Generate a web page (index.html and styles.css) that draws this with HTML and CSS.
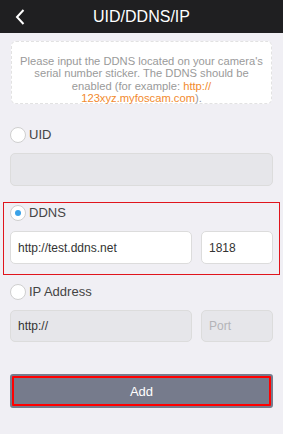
FILE: index.html
```html
<!DOCTYPE html>
<html lang="en">
<head>
  <meta charset="UTF-8">
  <title>UID/DDNS/IP</title>
  <link rel="stylesheet" href="styles.css">
</head>
<body>
  <header class="topbar">
    <svg class="back" width="12" height="18" viewBox="0 0 12 18">
      <path d="M9.5 2 L3 9 L9.5 16" fill="none" stroke="#fff" stroke-width="2"/>
    </svg>
    <h1>UID/DDNS/IP</h1>
  </header>

  <main class="content">
    <div class="tip">
      <p>Please input the DDNS located on your camera's</p>
      <p>serial number sticker. The DDNS should be</p>
      <p>enabled (for example: <span class="link">http://</span></p>
      <p><span class="link">123xyz.myfoscam.com</span>).</p>
    </div>

    <!-- UID -->
    <div class="group uid">
      <label class="option"><span class="radio"></span>UID</label>
      <div class="row">
        <div class="field disabled wide"></div>
      </div>
    </div>

    <!-- DDNS -->
    <div class="group ddns active">
      <label class="option"><span class="radio checked"></span>DDNS</label>
      <div class="row">
        <div class="field wide">http://test.ddns.net</div>
        <div class="field port">1818</div>
      </div>
    </div>

    <!-- IP -->
    <div class="group ip">
      <label class="option"><span class="radio"></span>IP Address</label>
      <div class="row">
        <div class="field disabled wide">http://</div>
        <div class="field disabled port placeholder">Port</div>
      </div>
    </div>

    <button class="add">Add</button>
  </main>
</body>
</html>
```

FILE: styles.css
```css
body {
  margin: 0;
  width: 283px;
  height: 434px;
  background-color: #f0eff4;
  font-family: "Liberation Sans", Arial, sans-serif;
  color: #333;
  overflow: hidden;
}

.topbar {
  height: 33px;
  background-color: #1f1f21;
  display: flex;
  align-items: center;
  justify-content: center;
  position: relative;
}

.topbar h1 {
  margin: 0;
  font-size: 16px;
  font-weight: normal;
  color: #fff;
}

.back {
  position: absolute;
  left: 14px;
  top: 8px;
}

.content {
  padding: 8px 3px 0;
}

.tip {
  margin: 0 8px;
  height: 63px;
  box-sizing: border-box;
  padding: 13px 4px 0;
  background-color: #fff;
  border: 1px dashed #e2e2e2;
  border-radius: 5px;
  font-size: 11.2px;
  line-height: 12.4px;
  color: #9a9a9a;
  text-align: center;
}

.tip p {
  margin: 0;
  white-space: nowrap;
}

.link {
  color: #f28a2e;
}

.group {
  padding: 0 6px;
  border: 1px solid transparent;
}

.group.uid {
  margin-top: 22px;
}

.group.ddns {
  margin-top: 15px;
  padding-top: 2px;
  padding-bottom: 10px;
}

.group.ip {
  margin-top: 8px;
}

.group.active {
  border-color: #e0141c;
}

.option {
  display: flex;
  align-items: center;
  gap: 3px;
  height: 15px;
  font-size: 13px;
  color: #444;
}

.radio {
  width: 14px;
  height: 14px;
  border: 1px solid #cfcfcf;
  border-radius: 50%;
  background-color: #fff;
  display: flex;
  align-items: center;
  justify-content: center;
}

.radio.checked::after {
  content: "";
  width: 6px;
  height: 6px;
  border-radius: 50%;
  background-color: #3aa2e8;
}

.row {
  display: flex;
  gap: 9px;
  margin-top: 11px;
}

.field {
  height: 33px;
  box-sizing: border-box;
  border: 1px solid #dcdcdc;
  border-radius: 5px;
  background-color: #fff;
  font-size: 12px;
  color: #333;
  padding: 0 7px;
  display: flex;
  align-items: center;
}

.field.wide {
  flex: 1;
}

.field.port {
  width: 72px;
}

.field.disabled {
  background-color: #e6e6ea;
}

.ip .field {
  height: 32px;
}

.field.placeholder {
  color: #b4b4b8;
}

.add {
  display: block;
  margin: 31px 7px 0;
  width: calc(100% - 14px);
  height: 34px;
  background-color: #767b8c;
  border: 2px solid #767b8c;
  border-radius: 3px;
  outline: 2px solid #ff0000;
  outline-offset: -4px;
  color: #fff;
  font-family: inherit;
  font-size: 13px;
}
```
